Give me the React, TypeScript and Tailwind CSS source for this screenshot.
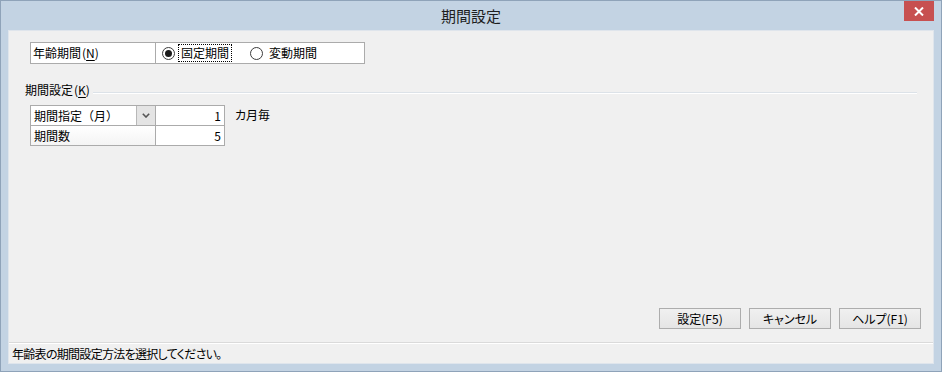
import React from "react";

function Radio({ checked }: { checked?: boolean }) {
  return (
    <div className="w-[13px] h-[13px] rounded-full border border-[#3c3c3c] bg-white flex items-center justify-center shrink-0">
      {checked && <div className="w-[7px] h-[7px] rounded-full bg-[#1a1a1a]" />}
    </div>
  );
}

function Btn({ children }: { children: React.ReactNode }) {
  return (
    <div className="w-[82px] h-[21px] border border-[#adadad] bg-gradient-to-b from-[#f0f0f0] to-[#e5e5e5] flex items-center justify-center leading-none">
      {children}
    </div>
  );
}

export default function App() {
  return (
    <div className="w-[942px] h-[372px] bg-[#c3d3e3] border border-[#8fa3b9] flex flex-col relative font-['Noto_Sans_CJK_JP',sans-serif] text-[12px] text-black [font-feature-settings:'palt']">
      <div className="h-[29px] flex items-center justify-center text-[15px] text-[#1e1e1e] pt-[1px]">期間設定</div>
      <div className="absolute top-0 right-[7px] w-[30px] h-[20px] bg-[#c75050] flex items-center justify-center">
        <svg width="10" height="9" viewBox="0 0 10 9">
          <path d="M1 0.5 L9 8.5 M9 0.5 L1 8.5" stroke="white" strokeWidth="2" />
        </svg>
      </div>
      <div className="mx-[7px] h-[334px] bg-[#f0f0f0] border border-[#dfe5ec] flex flex-col">
        {/* Row 1 */}
        <div className="ml-[21px] mt-[11px] w-[335px] h-[22px] border border-[#ababab] flex bg-white">
          <div className="w-[125px] border-r border-[#ababab] pl-[2px] flex items-center leading-none">
            年齢期間<span className="ml-[1px]">(</span><span className="underline underline-offset-2">N</span>)
          </div>
          <div className="flex-1 flex items-center">
            <div className="ml-[6px]">
              <Radio checked />
            </div>
            <div className="ml-[3px] h-[18px] px-[2px] border border-dotted border-black flex items-center leading-none">固定期間</div>
            <div className="ml-[18px]">
              <Radio />
            </div>
            <div className="ml-[6px] leading-none">変動期間</div>
          </div>
        </div>

        {/* Group header */}
        <div className="ml-[16px] mr-[16px] mt-[19px] h-[14px] flex items-start">
          <div className="leading-[14px]">
            期間設定<span className="ml-[1px]">(</span><span className="underline underline-offset-2">K</span>)
          </div>
          <div className="flex-1 ml-[3px] mt-[9px] h-[2px] border-t border-[#dce2e8] border-b border-b-white" />
        </div>

        {/* Table 2 */}
        <div className="ml-[21px] mt-[8px] flex items-start">
          <div className="w-[195px] h-[41px] border border-[#ababab] flex flex-col bg-white">
            <div className="h-[20px] flex border-b border-[#ababab]">
              <div className="w-[125px] border-r border-[#ababab] flex">
                <div className="flex-1 pl-[3px] flex items-center leading-none [font-feature-settings:normal]">期間指定（月）</div>
                <div className="w-[19px] h-full border-l border-[#b8b8b8] bg-[#e4e4e4] flex items-center justify-center">
                  <svg width="8" height="5" viewBox="0 0 8 5">
                    <path d="M0.8 0.8 L4 4 L7.2 0.8" stroke="#555" strokeWidth="1.6" fill="none" />
                  </svg>
                </div>
              </div>
              <div className="flex-1 flex items-center justify-end pr-[3px] leading-none">1</div>
            </div>
            <div className="flex-1 flex">
              <div className="w-[125px] border-r border-[#ababab] pl-[3px] flex items-center leading-none bg-gradient-to-b from-white to-[#f4f4f4]">期間数</div>
              <div className="flex-1 flex items-center justify-end pr-[3px] leading-none">5</div>
            </div>
          </div>
          <div className="ml-[10px] h-[20px] flex items-center leading-none">カ月毎</div>
        </div>

        <div className="flex-1" />

        {/* Buttons */}
        <div className="flex justify-end gap-[8px] mr-[12px]">
          <Btn>設定(F5)</Btn>
          <Btn>キャンセル</Btn>
          <Btn>ヘルプ(F1)</Btn>
        </div>

        <div className="mt-[13px] h-[2px] border-t border-[#dadada] border-b border-b-white" />
        <div className="h-[19px] pl-[3px] flex items-center leading-none tracking-[-0.7px]">年齢表の期間設定方法を選択してください。</div>
      </div>
    </div>
  );
}
